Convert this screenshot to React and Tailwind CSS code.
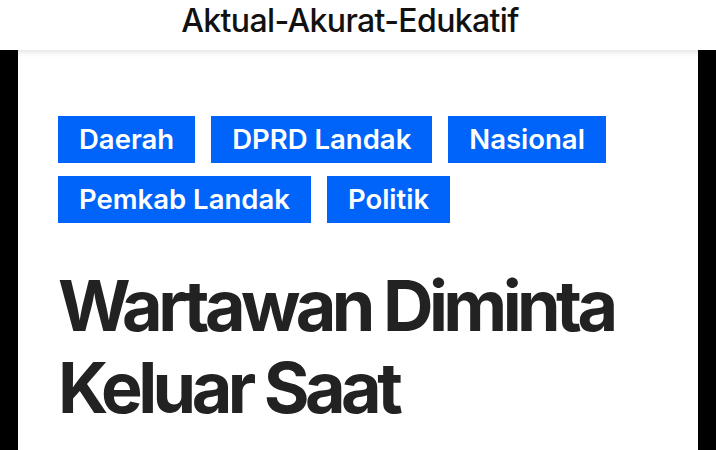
const tags = [
  ["Daerah", "DPRD Landak", "Nasional"],
  ["Pemkab Landak", "Politik"],
];

export default function App() {
  return (
    <div className="h-[450px] w-[716px] overflow-hidden bg-black" style={{ fontFamily: "Inter, 'Noto Sans', sans-serif" }}>
      {/* site tagline bar */}
      <header className="relative z-10 flex h-[50px] justify-center bg-white pt-[1px] pr-4 shadow-[0_2px_6px_rgba(0,0,0,0.12)]">
        <h2 className="text-[32px] font-medium leading-[40px] tracking-[-0.02em] text-[#111]">Aktual-Akurat-Edukatif</h2>
      </header>

      {/* article card */}
      <main className="mx-[18px] h-[400px] bg-white px-10 pt-[66px]">
        <div className="flex flex-col gap-[13px]">
          {tags.map((row, i) => (
            <div key={i} className="flex gap-4">
              {row.map((t) => (
                <a key={t} className="flex h-[47px] items-center bg-[#0064fa] px-[21px] text-[27.5px] font-semibold text-white">
                  {t}
                </a>
              ))}
            </div>
          ))}
        </div>
        <h1 className="mt-[42px] text-[70px] font-bold leading-[82px] tracking-[-0.065em] text-[#222]">
          Wartawan Diminta
          <br />
          Keluar Saat
        </h1>
      </main>
    </div>
  );
}
